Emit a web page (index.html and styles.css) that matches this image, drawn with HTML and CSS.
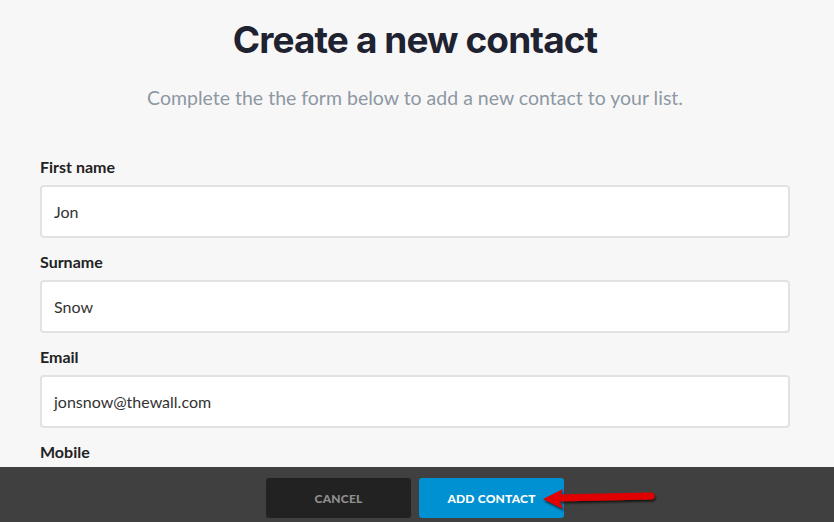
FILE: index.html
```html
<!DOCTYPE html>
<html>
<head>
<meta charset="utf-8">
<link rel="stylesheet" href="styles.css">
</head>
<body>
<main class="page">
  <h1 class="title">Create a new contact</h1>
  <p class="subtitle">Complete the the form below to add a new contact to your list.</p>
  <form class="form">
    <div class="field">
      <label class="label">First name</label>
      <div class="input">Jon</div>
    </div>
    <div class="field">
      <label class="label">Surname</label>
      <div class="input">Snow</div>
    </div>
    <div class="field">
      <label class="label">Email</label>
      <div class="input">jonsnow@thewall.com</div>
    </div>
    <div class="field">
      <label class="label">Mobile</label>
      <div class="input"></div>
    </div>
  </form>
</main>
<footer class="footer">
  <button class="btn btn-cancel">CANCEL</button>
  <button class="btn btn-add">ADD CONTACT</button>
  <svg class="arrow" width="120" height="30" viewBox="0 0 120 30">
    <defs>
      <filter id="sh" x="-20%" y="-50%" width="140%" height="200%">
        <feDropShadow dx="1" dy="2" stdDeviation="1.2" flood-color="#000" flood-opacity="0.7"/>
      </filter>
    </defs>
    <g filter="url(#sh)">
      <path d="M14 14 L110 12" stroke="#e00000" stroke-width="7" stroke-linecap="round" fill="none"/>
      <path d="M2 15 L22 5 L18 15 L22 25 Z" fill="#e00000"/>
    </g>
  </svg>
</footer>
</body>
</html>
```
FILE: styles.css
```css
html, body {
  margin: 0;
  padding: 0;
}
body {
  background: #f7f7f7;
  width: 834px;
  height: 522px;
  overflow: hidden;
  font-family: "Lato", "Open Sans", sans-serif;
  position: relative;
}
.page {
  padding: 0 44px 0 40px;
}
.title {
  margin: 0;
  padding-top: 18px;
  text-align: center;
  font-family: "Inter", sans-serif;
  font-weight: 700;
  font-size: 37px;
  letter-spacing: -0.9px;
  line-height: 44px;
  color: #1f2230;
}
.subtitle {
  margin: 23px 0 0;
  text-align: center;
  font-size: 19.5px;
  line-height: 26px;
  color: #8e98a3;
}
.form {
  margin-top: 46px;
  display: flex;
  flex-direction: column;
  gap: 14px;
}
.field {
  display: flex;
  flex-direction: column;
  gap: 8px;
}
.label {
  font-weight: 700;
  font-size: 16px;
  line-height: 20px;
  color: #222;
}
.input {
  height: 49px;
  box-sizing: content-box;
  border: 2px solid #e2e2e2;
  border-radius: 4px;
  background: #fff;
  padding: 0 12px;
  display: flex;
  align-items: center;
  font-size: 16px;
  color: #333;
}
.footer {
  position: absolute;
  left: 0;
  right: 0;
  bottom: 0;
  height: 55px;
  background: #404040;
  display: flex;
  justify-content: center;
  align-items: flex-start;
  gap: 8px;
  padding: 11px 4px 0 0;
  box-sizing: border-box;
}
.btn {
  width: 145px;
  height: 40px;
  border: none;
  border-radius: 3px;
  font-family: "Lato", "Open Sans", sans-serif;
  font-weight: 900;
  font-size: 12px;
  letter-spacing: 0.2px;
}
.btn-cancel {
  background: #222;
  color: #8f8f8f;
}
.btn-add {
  background: #0091d2;
  color: #fff;
}
.arrow {
  position: absolute;
  left: 541px;
  top: 17px;
}
```
